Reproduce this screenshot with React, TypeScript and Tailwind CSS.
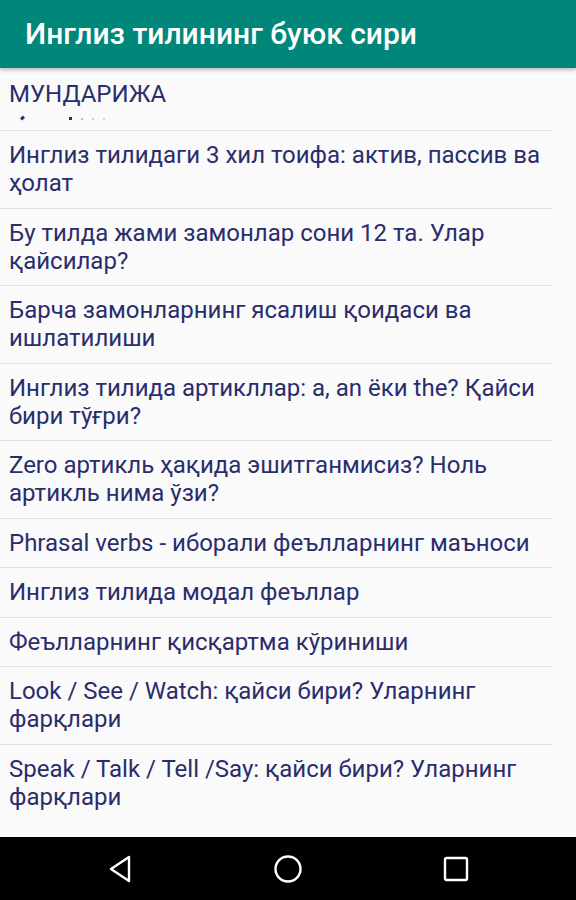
const items = [
  "Инглиз тилидаги 3 хил тоифа: актив, пассив ва ҳолат",
  "Бу тилда жами замонлар сони 12 та. Улар қайсилар?",
  "Барча замонларнинг ясалиш қоидаси ва ишлатилиши",
  "Инглиз тилида артикллар: a, an ёки the? Қайси бири тўғри?",
  "Zero артикль ҳақида эшитганмисиз? Ноль артикль нима ўзи?",
  "Phrasal verbs - иборали феълларнинг маъноси",
  "Инглиз тилида модал феъллар",
  "Феълларнинг қисқартма кўриниши",
  "Look / See / Watch: қайси бири? Уларнинг фарқлари",
  "Speak / Talk / Tell /Say: қайси бири? Уларнинг фарқлари",
]

function NavBar() {
  return (
    <div className="flex h-[63px] items-center justify-between bg-black px-[107px]">
      <svg width="26" height="30" viewBox="0 0 26 30" fill="none">
        <path d="M22 3 L4 15 L22 27 Z" stroke="white" strokeWidth="2.4" strokeLinejoin="round" />
      </svg>
      <svg width="30" height="30" viewBox="0 0 30 30" fill="none">
        <circle cx="15" cy="15" r="12.5" stroke="white" strokeWidth="2.4" />
      </svg>
      <svg width="26" height="26" viewBox="0 0 26 26" fill="none">
        <rect x="2" y="2" width="22" height="22" rx="1.5" stroke="white" strokeWidth="2.4" />
      </svg>
    </div>
  )
}

export default function App() {
  return (
    <div className="flex h-[900px] w-[576px] flex-col bg-[#fafafa] font-['Roboto',sans-serif]">
      <div className="relative z-10 flex h-[68px] shrink-0 items-center bg-[#00877a] pl-[25px] shadow-[0_2px_4px_rgba(0,0,0,0.25)]">
        <h1 className="pb-[2px] text-[30px] font-medium text-white">Инглиз тилининг буюк сири</h1>
      </div>

      <div className="flex-1 overflow-hidden">
        <div className="mr-[23px] border-b border-[#e2e2e2] pl-[9px]">
          <div className="h-[62px] overflow-hidden pt-[12px]">
            <p className="text-[24px] leading-[28px] text-[#2a2d6c]">МУНДАРИЖА</p>
            <div className="mt-[8px] flex items-end gap-[9px] pl-[12px]">
              <span className="block h-[4px] w-[3px] rotate-45 bg-[#2a2d6c]" />
              <span className="ml-[36px] block h-[3px] w-[3px] bg-[#2a2d6c]" />
              <span className="block h-[2px] w-[2px] bg-[#b8b9cc]" />
              <span className="block h-[2px] w-[2px] bg-[#c8c9d8]" />
              <span className="block h-[2px] w-[2px] bg-[#d4d5e0]" />
            </div>
          </div>
        </div>

        {items.map((item) => (
          <div
            key={item}
            className="mr-[23px] border-b border-[#e2e2e2] pt-[10px] pb-[10.5px] pl-[9px] pr-[6px] last:border-b-0"
          >
            <p className="text-[24px] leading-[28px] text-[#2a2d6c]">{item}</p>
          </div>
        ))}
      </div>

      <NavBar />
    </div>
  )
}
